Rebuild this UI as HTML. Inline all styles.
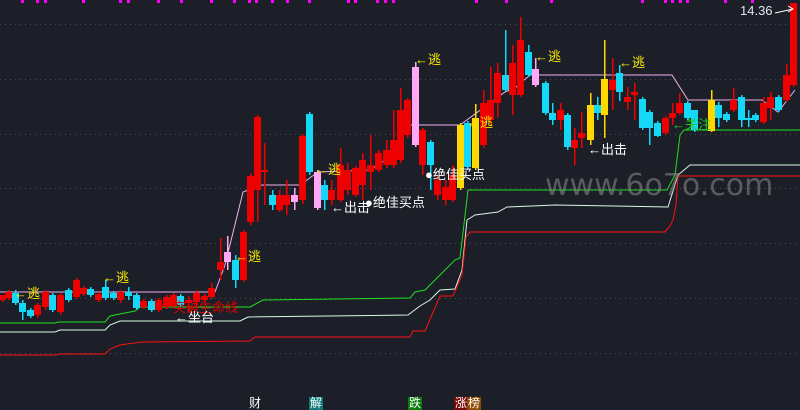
<!DOCTYPE html>
<html><head><meta charset="utf-8"><style>
html,body{margin:0;padding:0;background:#1c1f28;}
#c{position:relative;width:800px;height:410px;overflow:hidden;background:#1c1f28;font-family:"Liberation Sans","Noto Sans CJK SC",sans-serif;}
svg{position:absolute;left:0;top:0}
.t{position:absolute;font-size:13px;white-space:nowrap;line-height:14px}
.y{color:#ffee00}.w{color:#ffffff}
.b{position:absolute;top:397px;font-size:12px;line-height:13px;color:#fff;padding:0 1px}
</style></head><body><div id="c">
<svg id="s" width="800" height="410" xmlns="http://www.w3.org/2000/svg"></svg>
<div class="t" style="left:740px;top:4px;color:#dfe6f0;font-size:13px">14.36</div>
<div style="position:absolute;left:545px;top:168px;font-size:30px;color:rgba(140,140,140,0.55);font-family:'DejaVu Sans',sans-serif;letter-spacing:0px">www.6o7o.com</div>
<div class="t y" style="left:14px;top:287px">←逃</div>
<div class="t y" style="left:103px;top:271px">←逃</div>
<div class="t y" style="left:235px;top:250px">←逃</div>
<div class="t y" style="left:315px;top:163px">←逃</div>
<div class="t y" style="left:415px;top:53px">←逃</div>
<div class="t y" style="left:467px;top:116px">←逃</div>
<div class="t y" style="left:535px;top:50px">←逃</div>
<div class="t y" style="left:619px;top:56px">←逃</div>
<div class="t w" style="left:331px;top:201px">←出击</div>
<div class="t w" style="left:365px;top:196px">●绝佳买点</div>
<div class="t w" style="left:425px;top:168px">●绝佳买点</div>
<div class="t w" style="left:588px;top:143px">←出击</div>
<div class="t" style="left:173px;top:301px;color:#e00000">突破生命线</div>
<div class="t w" style="left:175px;top:311px">←坐台</div>
<div class="t" style="left:672px;top:118px;color:#1fd01f">←关注</div>
<div class="b" style="left:248px">财</div>
<div class="b" style="left:309px;background:#0c7a7a">解</div>
<div class="b" style="left:408px;background:#0a7a0a">跌</div>
<div class="b" style="left:454px;background:#7a0a0a">涨</div><div class="b" style="left:467px;background:#8a4a00">榜</div>
</div>
<script>
var s=document.getElementById('s'),h='';
[24,79,134,188,243,298,353].forEach(function(y){h+='<line x1="0" x2="800" y1="'+y+'.5" y2="'+y+'.5" stroke="#4a4e58" stroke-dasharray="1,4"/>';});
[21,36,44,82,119,127,157,180,210,233,248,255,271,286,308,347,354,376,384,392,475,505,550,641,664,671,679,686,724,751].forEach(function(x){h+='<rect x="'+x+'" y="0" width="3" height="3" fill="#ff00ff"/>';});
function pl(p,c){h+='<polyline fill="none" stroke="'+c+'" stroke-width="1" points="'+p+'"/>';}
pl('0,292 215,292 225,265 243,192 262,185 300,185 318,172 370,170 385,160 410,125 460,125 505,92 515,88 530,75 672,75 688,100 762,100 778,112 795,90','#f0b0f0');
pl('0,323 55,323 58,322 105,322 110,316 135,311 140,307 250,307 263,300 410,298 415,292 425,290 430,285 455,260 460,258 468,190 667,190 675,175 680,135 684,130 800,130','#1fe01f');
pl('0,332 55,332 60,330 105,330 110,325 120,321 240,321 248,317 408,315 420,306 430,300 440,290 455,289 462,270 467,220 475,215 498,212 507,207 555,205 668,207 678,175 690,165 800,165','#d8f8e0');
pl('0,355 55,355 60,354 105,354 110,349 120,345 142,342 250,341 255,337 410,337 413,331 425,331 440,296 453,296 462,275 466,237 470,232 665,232 670,226 673,220 676,205 678,176 800,176','#ff1010');
var C={r:'#ee0000',c:'#14d8f8',p:'#ffa8f8',y:'#ffd800'};
var k=[[2,295,295,300,302,'r'],[8,290,292,298,300,'r'],[15,290,293,303,305,'c'],[22,300,303,312,320,'c'],[30,308,310,316,318,'c'],[37,303,305,315,318,'r'],[45,290,292,307,310,'r'],[52,293,295,310,312,'c'],[60,293,295,312,315,'r'],[68,288,290,300,302,'c'],[76,278,280,297,299,'r'],[83,286,288,294,296,'r'],[90,287,289,295,297,'c'],[98,292,294,300,302,'r'],[105,280,287,298,300,'c'],[113,291,293,298,300,'c'],[120,290,292,300,303,'r'],[128,287,292,296,300,'c'],[136,293,295,308,310,'c'],[143,299,301,307,309,'r'],[151,299,301,310,312,'c'],[158,298,300,310,312,'r'],[166,295,297,307,309,'r'],[173,293,295,306,308,'r'],[180,294,296,305,307,'c'],[188,296,300,303,313,'r'],[196,290,293,302,310,'r'],[204,294,296,300,302,'r'],[211,283,288,297,299,'r'],[220,238,262,270,280,'r'],[227,236,252,262,270,'p'],[235,255,260,280,288,'c'],[243,230,232,280,282,'r'],[250,173,176,222,225,'r'],[257,115,117,190,222,'r'],[264,143,170,172,205,'r'],[272,190,195,205,210,'c'],[279,190,195,210,212,'r'],[286,180,195,205,215,'r'],[294,188,195,202,210,'p'],[302,134,136,200,204,'r'],[309,112,114,172,175,'c'],[317,170,172,208,210,'p'],[324,180,185,200,210,'c'],[331,180,190,200,205,'r'],[340,148,165,200,202,'r'],[347,163,170,190,195,'r'],[355,166,168,195,197,'r'],[362,153,160,185,200,'r'],[370,135,165,172,190,'r'],[378,150,153,170,172,'r'],[386,140,150,165,168,'r'],[393,110,140,165,168,'r'],[400,88,110,160,163,'r'],[407,98,100,135,138,'r'],[415,62,67,145,147,'p'],[422,128,130,165,175,'r'],[430,140,142,165,190,'c'],[437,175,180,195,200,'r'],[445,180,187,200,205,'r'],[452,165,175,200,202,'r'],[460,123,125,188,190,'y'],[467,121,123,167,170,'c'],[475,104,118,168,170,'y'],[483,90,103,145,148,'r'],[490,67,100,120,125,'r'],[497,63,73,103,117,'r'],[505,30,75,90,92,'c'],[512,45,63,95,115,'r'],[520,17,40,95,97,'r'],[528,45,52,75,77,'c'],[535,58,69,85,87,'p'],[545,81,83,113,115,'c'],[552,103,113,120,125,'c'],[560,103,110,120,130,'r'],[567,113,115,147,150,'c'],[574,128,140,148,165,'r'],[581,112,133,138,148,'r'],[590,93,105,140,145,'y'],[597,97,105,113,120,'c'],[604,40,79,115,138,'y'],[612,58,80,90,110,'r'],[619,65,73,92,101,'c'],[627,87,97,102,110,'r'],[634,83,92,95,120,'r'],[642,97,99,128,130,'c'],[649,110,112,128,145,'c'],[657,121,123,136,137,'c'],[665,116,118,133,135,'r'],[672,103,113,118,125,'r'],[679,93,103,113,115,'r'],[687,101,103,118,120,'c'],[694,110,110,130,132,'c'],[711,90,100,131,132,'y'],[718,102,105,118,127,'c'],[726,112,114,120,122,'c'],[733,88,100,110,112,'r'],[741,95,97,120,127,'c'],[748,110,118,120,127,'c'],[755,113,115,120,122,'c'],[763,97,103,122,124,'r'],[770,92,97,108,120,'r'],[778,95,97,110,112,'c'],[786,64,75,100,102,'r'],[793,3,3,85,87,'r']];
k.forEach(function(a){var x=a[0],c=C[a[5]];h+='<rect x="'+x+'" y="'+a[1]+'" width="1.5" height="'+(a[4]-a[1])+'" fill="'+c+'"/><rect x="'+(x-3)+'" y="'+a[2]+'" width="7" height="'+Math.max(2,a[3]-a[2])+'" fill="'+c+'"/>';});
h+='<polyline fill="none" stroke="#fff" stroke-width="1" points="775,13 793,9"/><polyline fill="none" stroke="#fff" points="788,6 793,9 788,12"/>';
s.innerHTML=h;
</script>
</body></html>
